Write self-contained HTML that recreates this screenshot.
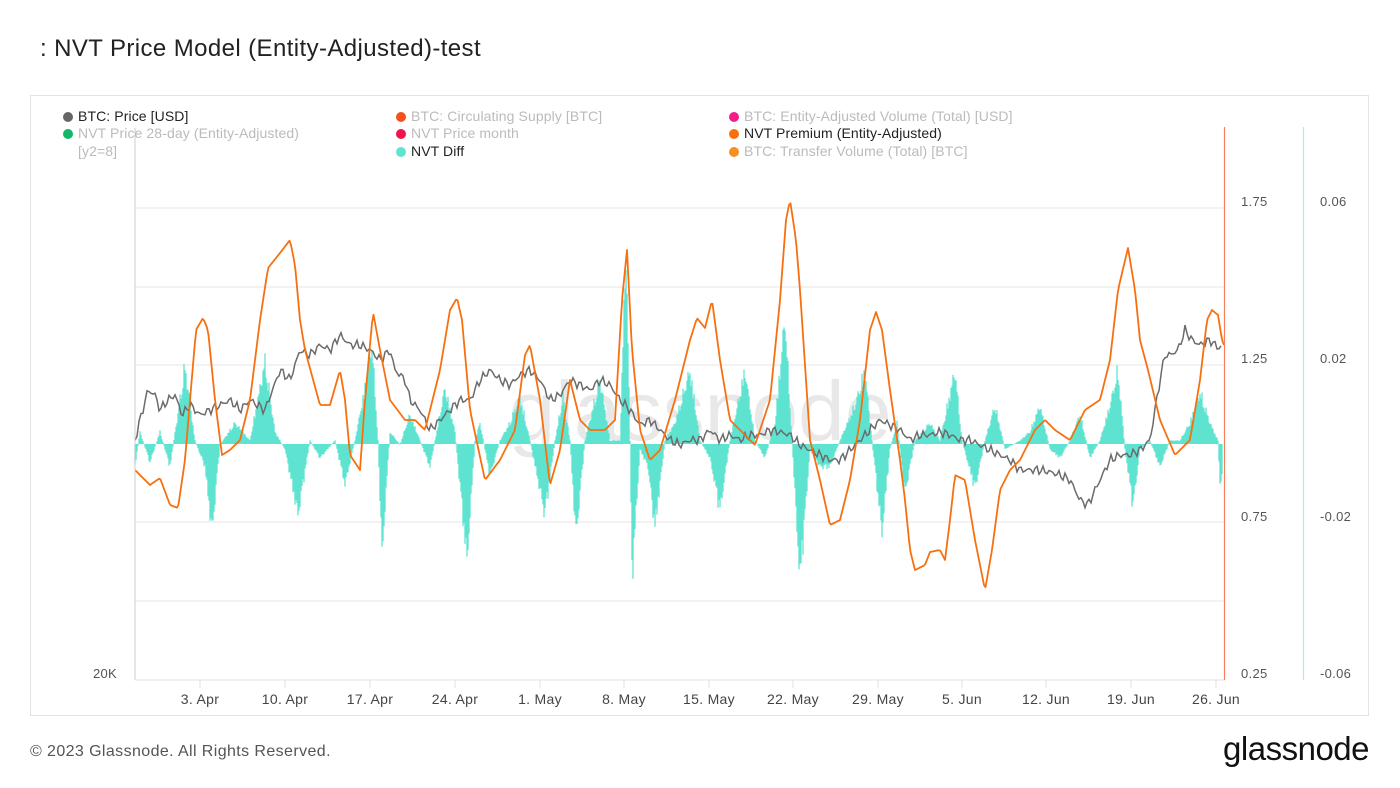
<!DOCTYPE html>
<html><head><meta charset="utf-8"><style>
body{margin:0;width:1400px;height:788px;background:#fff;font-family:"Liberation Sans",sans-serif;overflow:hidden;position:relative}
.t{position:absolute;left:40px;top:35px;font-size:24px;color:#222;letter-spacing:0.4px}
.card{position:absolute;left:30px;top:95px;width:1339px;height:621px;border:1px solid #e3e3e3;box-sizing:border-box}
.lg{position:absolute;font-size:14px;color:#bbb;white-space:nowrap;letter-spacing:0.1px}
.lg i{display:inline-block;width:10px;height:10px;border-radius:50%;margin-right:5px;vertical-align:-1px}
.dk{color:#222}
.ax{position:absolute;font-size:13px;color:#555;letter-spacing:0.3px}
.foot{position:absolute;left:30px;top:743px;font-size:16px;color:#555;letter-spacing:0.4px}
.logo{position:absolute;right:31px;top:730px;font-size:33px;color:#111;letter-spacing:-0.5px}
</style></head><body>
<div class="t">: NVT Price Model (Entity-Adjusted)-test</div>
<div class="card"></div>
<svg id="s" width="1400" height="788" style="position:absolute;left:0;top:0"></svg>
<div class="lg dk" style="left:63px;top:108px"><i style="background:#666"></i>BTC: Price [USD]</div>
<div class="lg" style="left:63px;top:125px"><i style="background:#12b76a"></i>NVT Price 28-day (Entity-Adjusted)</div>
<div class="lg" style="left:78px;top:143px">[y2=8]</div>
<div class="lg" style="left:396px;top:108px"><i style="background:#f4511e"></i>BTC: Circulating Supply [BTC]</div>
<div class="lg" style="left:396px;top:125px"><i style="background:#f0134d"></i>NVT Price month</div>
<div class="lg dk" style="left:396px;top:143px"><i style="background:#5fe3d1"></i>NVT Diff</div>
<div class="lg" style="left:729px;top:108px"><i style="background:#f21f8a"></i>BTC: Entity-Adjusted Volume (Total) [USD]</div>
<div class="lg dk" style="left:729px;top:125px"><i style="background:#f7700f"></i>NVT Premium (Entity-Adjusted)</div>
<div class="lg" style="left:729px;top:143px"><i style="background:#f7901e"></i>BTC: Transfer Volume (Total) [BTC]</div>
<div class="ax" style="left:1241px;top:194px">1.75</div>
<div class="ax" style="left:1241px;top:351px">1.25</div>
<div class="ax" style="left:1241px;top:509px">0.75</div>
<div class="ax" style="left:1241px;top:666px">0.25</div>
<div class="ax" style="left:1320px;top:194px">0.06</div>
<div class="ax" style="left:1320px;top:351px">0.02</div>
<div class="ax" style="left:1320px;top:509px">-0.02</div>
<div class="ax" style="left:1320px;top:666px">-0.06</div>
<div class="ax" style="left:93px;top:666px">20K</div>
<div class="foot">© 2023 Glassnode. All Rights Reserved.</div>
<div class="logo">glassnode</div>
<script>
var s=document.getElementById('s'),h='';
[208,287,365,522,601].forEach(function(y){h+='<line x1="135" x2="1224" y1="'+y+'" y2="'+y+'" stroke="#e6e6e6"/>';});
h+='<line x1="135" x2="1224" y1="680" y2="680" stroke="#e0e0e0"/>';
h+='<text x="700" y="440" font-size="84" fill="#e8e8e8" text-anchor="middle" font-family="Liberation Sans">glassnode</text>';
var dates=[[200,'3. Apr'],[285,'10. Apr'],[370,'17. Apr'],[455,'24. Apr'],[540,'1. May'],[624,'8. May'],[709,'15. May'],[793,'22. May'],[878,'29. May'],[962,'5. Jun'],[1046,'12. Jun'],[1131,'19. Jun'],[1216,'26. Jun']];
dates.forEach(function(d){h+='<line x1="'+d[0]+'" x2="'+d[0]+'" y1="680" y2="688" stroke="#e0e0e0"/><text x="'+d[0]+'" y="704" font-size="14" fill="#444" text-anchor="middle" font-family="Liberation Sans" letter-spacing="0.3">'+d[1]+'</text>';});
function interp(p,x){for(var i=0;i<p.length-1;i++){if(x>=p[i][0]&&x<=p[i+1][0]){var t=(x-p[i][0])/(p[i+1][0]-p[i][0]);return p[i][1]+t*(p[i+1][1]-p[i][1]);}}return p[p.length-1][1];}
var sp=[[135,470],[140,430],[150,465],[160,430],[170,470],[185,355],[195,440],[205,470],[212,545],[220,445],[235,420],[250,440],[265,350],[275,430],[285,450],[298,525],[310,440],[320,460],[335,440],[345,490],[355,440],[365,380],[372,330],[378,440],[382,570],[390,430],[400,445],[410,410],[420,440],[430,470],[445,380],[455,430],[467,578],[475,440],[480,420],[490,480],[500,440],[510,420],[520,390],[530,440],[545,525],[555,440],[563,390],[570,440],[576,550],[585,440],[600,370],[610,440],[620,440],[626,218],[630,440],[632,598],[640,450],[648,470],[655,540],[665,440],[675,420],[690,360],[700,440],[710,460],[720,520],[730,440],[745,360],[755,440],[765,460],[775,420],[785,300],[792,440],[800,600],[810,450],[820,470],[830,470],[840,440],[855,400],[865,360],[872,440],[882,545],[890,450],[897,420],[905,500],[915,440],[930,420],[940,440],[955,360],[962,440],[975,495],[985,440],[995,400],[1005,450],[1020,440],[1030,430],[1040,400],[1050,450],[1060,460],[1070,440],[1080,410],[1090,460],[1100,440],[1110,400],[1118,360],[1125,450],[1133,515],[1140,450],[1150,440],[1160,470],[1170,440],[1180,440],[1190,420],[1200,385],[1210,420],[1218,440],[1220,493],[1224,460]];
var d='';
for(var x=135;x<=1222;x++){var v=interp(sp,x)-444;var n=0.75+0.25*Math.abs(Math.sin(x*1.7)*Math.cos(x*0.63));var y=444+v*n;d+='M'+x+' 444V'+y.toFixed(1);}
h+='<path d="'+d+'" stroke="#5fe3d1" stroke-width="1.3"/>';
var gp=[[135,440],[140,420],[148,390],[155,395],[160,410],[168,400],[175,395],[182,415],[190,405],[200,415],[210,410],[220,405],[230,400],[240,410],[250,400],[265,410],[280,370],[290,380],[300,350],[310,355],[320,345],[330,350],[340,335],[350,345],[360,345],[370,350],[380,360],[390,350],[395,370],[405,380],[410,400],[420,410],[430,430],[440,420],[450,410],[460,400],[470,400],[480,380],[490,370],[500,380],[510,385],[520,375],[530,370],[540,380],[550,400],[560,395],[570,380],[580,385],[590,390],[600,380],[610,385],[620,400],[630,410],[640,425],[650,420],[660,430],[670,440],[680,445],[690,440],[700,440],[710,430],[720,440],[730,435],[740,440],[750,435],[760,435],[770,430],[780,432],[790,435],[800,445],[810,450],[820,455],[830,460],[840,460],[850,450],[860,440],[870,430],[880,420],[890,425],[900,430],[910,440],[920,435],[930,435],[940,432],[950,435],[960,440],[970,440],[980,445],[990,450],[1000,455],[1010,460],[1020,470],[1030,470],[1040,470],[1050,472],[1060,475],[1070,480],[1080,500],[1088,505],[1095,490],[1105,470],[1110,460],[1120,455],[1130,455],[1140,450],[1150,440],[1155,410],[1160,380],[1165,355],[1170,355],[1178,350],[1185,330],[1192,340],[1200,345],[1210,340],[1218,348],[1224,345]];
var g='';for(var x=135;x<=1222;x+=2){var y=interp(gp,x)+Math.sin(x*2.3)*3+Math.cos(x*1.1)*2;g+=(g?'L':'M')+x+' '+y.toFixed(1);}
h+='<path d="'+g+'" fill="none" stroke="#6b6b6b" stroke-width="1.5"/>';
var op=[[135,470],[145,480],[150,485],[160,478],[170,505],[178,508],[185,460],[190,400],[196,330],[203,318],[208,330],[215,400],[222,455],[230,450],[240,440],[250,400],[260,320],[268,268],[280,253],[290,240],[295,265],[300,320],[305,350],[320,405],[330,405],[340,370],[345,400],[350,455],[360,470],[365,400],[373,312],[380,350],[390,400],[405,420],[415,420],[425,430],[440,370],[450,310],[457,298],[462,320],[470,410],[485,480],[500,460],[515,430],[525,355],[530,345],[540,400],[550,485],[560,450],[570,380],[580,420],[590,430],[605,430],[615,420],[622,300],[627,250],[632,350],[640,430],[650,460],[660,450],[675,400],[690,340],[697,318],[705,328],[712,300],[720,360],[730,420],[740,430],[755,445],[770,400],[780,300],[786,220],[790,200],[796,240],[800,290],[810,440],[820,480],[830,525],[840,520],[850,480],[860,420],[870,330],[876,312],[882,330],[890,390],[900,460],[905,500],[910,550],[915,570],[925,565],[930,552],[940,550],[945,560],[950,520],[955,475],[965,480],[975,540],[985,590],[992,550],[1000,490],[1010,470],[1020,460],[1035,430],[1045,420],[1055,430],[1070,440],[1085,410],[1100,400],[1110,360],[1118,290],[1128,248],[1135,290],[1140,340],[1148,370],[1160,420],[1175,455],[1190,440],[1200,380],[1207,320],[1212,310],[1218,315],[1222,340],[1224,345]];
var o='';for(var x=135;x<=1224;x+=1.5){o+=(o?'L':'M')+x+' '+interp(op,x).toFixed(1);}
h+='<path d="'+o+'" fill="none" stroke="#f7700f" stroke-width="1.8" stroke-linejoin="round"/>';
h+='<line x1="135" x2="135" y1="128" y2="680" stroke="#ccc"/>';
h+='<line x1="1224.5" x2="1224.5" y1="127" y2="680" stroke="#f7805a" stroke-width="1.2"/>';
h+='<line x1="1303.5" x2="1303.5" y1="127" y2="680" stroke="#a8efe4" stroke-width="1.2"/>';
s.innerHTML=h;
</script>
</body></html>
